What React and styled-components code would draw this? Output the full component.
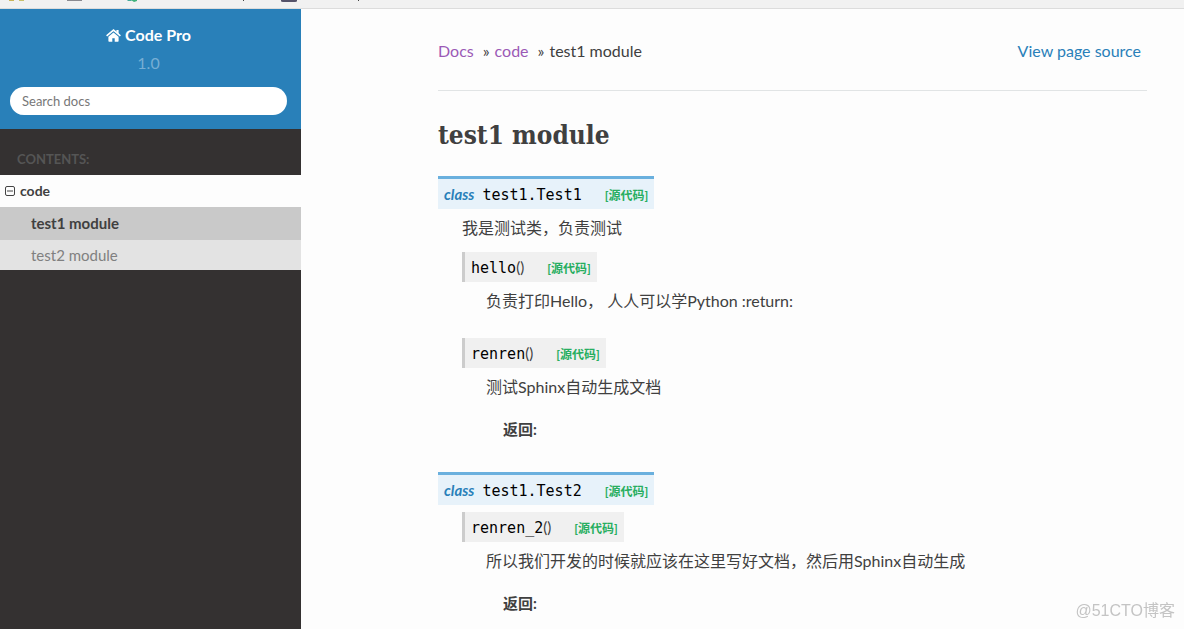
import React from "react";
import styled, { createGlobalStyle } from "styled-components";

const GlobalStyle = createGlobalStyle`
  *, *::before, *::after { box-sizing: border-box; }
  html, body, #root { min-height: 100vh; }
  body {
    margin: 0;
    background: #fdfdfd;
    color: #404040;
    font: 16px/24px Lato, "Noto Sans CJK SC", sans-serif;
    overflow: hidden;
  }
  a { color: inherit; text-decoration: none; }
`;

const Shell = styled.div`
  display: flex;
  flex-direction: column;
  height: 100vh;
  overflow: hidden;
`;

const TopStrip = styled.div`
  flex: none;
  height: 9px;
  background: #f1f1f1;
  border-bottom: 1px solid #dcdcdc;
  svg { display: block; }
`;

const Columns = styled.div`
  display: flex;
  flex: 1;
  min-height: 0;
`;

const Sidebar = styled.nav`
  flex: none;
  width: 301px;
  background: #343131;
`;

const Brand = styled.header`
  display: flex;
  flex-direction: column;
  align-items: center;
  height: 120px;
  padding: 12px 14px 0 10px;
  background: #2980b9;
`;

const BrandLink = styled.a`
  display: flex;
  align-items: center;
  gap: 4px;
  line-height: 28px;
  font-weight: 700;
  color: #fff;
`;

const Version = styled.div`
  line-height: 28px;
  color: #76aed4;
`;

const Search = styled.input`
  width: 100%;
  height: 28px;
  margin-top: 10px;
  padding: 0 12px;
  border: 0;
  border-radius: 14px;
  background: #fff;
  font: 13px Lato, sans-serif;
  color: #404040;
  &::placeholder { color: #777; opacity: 1; }
`;

const Caption = styled.p`
  height: 46px;
  margin: 0;
  padding: 14px 17px 0;
  font-size: 13px;
  line-height: 32px;
  font-weight: 700;
  color: #555;
`;

const TocRoot = styled.div`
  display: flex;
  align-items: center;
  gap: 5px;
  height: 32px;
  padding: 0 5px;
  background: #fdfdfd;
  font-size: 14px;
  font-weight: 700;
`;

const Toggle = styled.button`
  display: flex;
  padding: 0;
  border: 0;
  background: none;
  color: #444;
`;

const TocLink = styled.a`
  display: block;
  padding-left: 31px;
  font-size: 15px;
  line-height: ${(p) => (p.$current ? 33 : 30)}px;
  font-weight: ${(p) => (p.$current ? 700 : 400)};
  background: ${(p) => (p.$current ? "#c9c9c9" : "#e3e3e3")};
  && { color: ${(p) => (p.$current ? "#404040" : "#808080")}; }
`;

const Content = styled.main`
  flex: 1;
  min-width: 0;
  padding: 30px 37px 0 137px;
`;

const Breadcrumbs = styled.div`
  display: flex;
  justify-content: space-between;
  padding: 0 6px 27px 0;
`;

const Rule = styled.hr`
  margin: 0;
  border: 0;
  border-top: 1px solid #e1e4e5;
`;

const Crumbs = styled.div`
  display: flex;
  gap: 5px;
`;

const Crumb = styled.a`
  margin-right: 4px;
  && { color: #9b59b6; }
`;

const SourceLink = styled.a`
  && { color: #2980b9; }
`;

const Title = styled.h1`
  margin: 26px 0 23px;
  font: 700 26px/36px "Roboto Slab", "DejaVu Serif Condensed", "DejaVu Serif", serif;
`;

const ClassBlock = styled.section`
  margin-bottom: 31px;
`;

const ClassSignature = styled.div`
  display: inline-flex;
  align-items: baseline;
  height: 33px;
  padding: 0 6px;
  border-top: 3px solid #6ab0de;
  background: #e7f2fa;
  line-height: 30px;
  vertical-align: top;
`;

const Keyword = styled.em`
  margin-right: 8px;
  font-size: 15px;
  font-weight: 700;
  color: #2980b9;
`;

const Code = styled.code`
  font: 400 15px/30px "DejaVu Sans Mono", monospace;
  color: #000;
`;

const CodeLink = styled.a`
  margin-left: 23px;
  font-size: 12px;
  font-weight: 700;
  && { color: #27ae60; }
`;

const Body = styled.div`
  padding-left: 24px;
`;

const MethodSignature = styled.div`
  display: inline-flex;
  align-items: baseline;
  height: 30px;
  padding: 0 6px;
  border-left: 3px solid #ccc;
  background: #f0f0f0;
  line-height: 30px;
  vertical-align: top;
`;

const Paren = styled.span`
  font-size: 15px;
`;

const Text = styled.p`
  margin: 7px 0 12px;
`;

const Method = styled.article`
  margin-top: ${(p) => (p.$tight ? 7 : 0)}px;
  margin-bottom: 25px;
`;

const Field = styled.div`
  margin-top: 18px;
  padding-left: 17px;
  font-size: 15px;
  font-weight: 700;
`;

const Watermark = styled.div`
  position: fixed;
  right: 9px;
  bottom: 6px;
  font: 16px/24px "Liberation Sans", "Noto Sans CJK SC", sans-serif;
  color: #c4c4c4;
`;

const HomeIcon = () => (
  <svg width="15" height="13" viewBox="0 0 15 13" fill="#fff" aria-hidden="true">
    <path d="M7.5 3.6 2.4 7.8V12q0 .7.7.7h3.2V9.2h2.4v3.5h3.2q.7 0 .7-.7V7.8z" />
    <path d="M.6 6.8 7.5 1.1l6.9 5.7" fill="none" stroke="#fff" strokeWidth="1.6" />
    <path d="M10.4.9h2.2v4.6l-2.2-1.8z" />
  </svg>
);

const MinusIcon = () => (
  <svg width="10" height="10" viewBox="0 0 10 10" fill="none" stroke="currentColor" aria-hidden="true">
    <rect x="0.5" y="0.5" width="9" height="9" rx="1.5" />
    <path d="M2 5h6" />
  </svg>
);

const methods = (list, tight) =>
  list.map((m) => (
    <Method key={m.name} $tight={tight}>
      <MethodSignature>
        <Code>{m.name}</Code>
        <Paren>()</Paren>
        <CodeLink href="#source">[源代码]</CodeLink>
      </MethodSignature>
      <Body>
        <Text>{m.text}</Text>
        {m.returns && <Field>返回:</Field>}
      </Body>
    </Method>
  ));

const classes = [
  {
    name: "test1.Test1",
    text: "我是测试类，负责测试",
    methods: [
      { name: "hello", text: "负责打印Hello， 人人可以学Python :return:" },
      { name: "renren", text: "测试Sphinx自动生成文档", returns: true },
    ],
  },
  {
    name: "test1.Test2",
    methods: [
      {
        name: "renren_2",
        text: "所以我们开发的时候就应该在这里写好文档，然后用Sphinx自动生成",
        returns: true,
      },
    ],
  },
];

export default function App() {
  return (
    <Shell>
      <GlobalStyle />
      <TopStrip>
        <svg width="370" height="4" aria-hidden="true">
          <path d="M9 0h5v1H9z" fill="#c9b458" />
          <path d="M19 0h5v1h-5z" fill="#c9c06a" />
          <path d="M67 0h15v1H67z" fill="#8a8a90" />
          <path d="M127 0h4l1 1h-4z" fill="#4a9" />
          <path d="M131 0h6v1l-3 1z" fill="#3fb27a" />
          <path d="M243 0h1v1h-1zM358 0h1v1h-1z" fill="#444" />
          <path d="M281 0h16v1q0 1-2 1h-12q-2 0-2-1z" fill="#55536a" />
        </svg>
      </TopStrip>
      <Columns>
        <Sidebar>
          <Brand>
            <BrandLink href="#home">
              <HomeIcon />
              Code Pro
            </BrandLink>
            <Version>1.0</Version>
            <Search type="search" placeholder="Search docs" aria-label="Search docs" />
          </Brand>
          <Caption>CONTENTS:</Caption>
          <TocRoot>
            <Toggle aria-label="Collapse code">
              <MinusIcon />
            </Toggle>
            <a href="#code">code</a>
          </TocRoot>
          <TocLink href="#test1" $current>test1 module</TocLink>
          <TocLink href="#test2">test2 module</TocLink>
        </Sidebar>
        <Content>
          <Breadcrumbs>
            <Crumbs>
              <Crumb href="#docs">Docs</Crumb>
              <span>»</span>
              <Crumb href="#code">code</Crumb>
              <span>»</span>
              <span>test1 module</span>
            </Crumbs>
            <SourceLink href="#page-source">View page source</SourceLink>
          </Breadcrumbs>
          <Rule />
          <Title>test1 module</Title>
          {classes.map((c) => (
            <ClassBlock key={c.name}>
              <ClassSignature>
                <Keyword>class</Keyword>
                <Code>{c.name}</Code>
                <CodeLink href="#source">[源代码]</CodeLink>
              </ClassSignature>
              <Body>
                {c.text && <Text>{c.text}</Text>}
                {methods(c.methods, !c.text)}
              </Body>
            </ClassBlock>
          ))}
        </Content>
      </Columns>
      <Watermark>@51CTO博客</Watermark>
    </Shell>
  );
}
